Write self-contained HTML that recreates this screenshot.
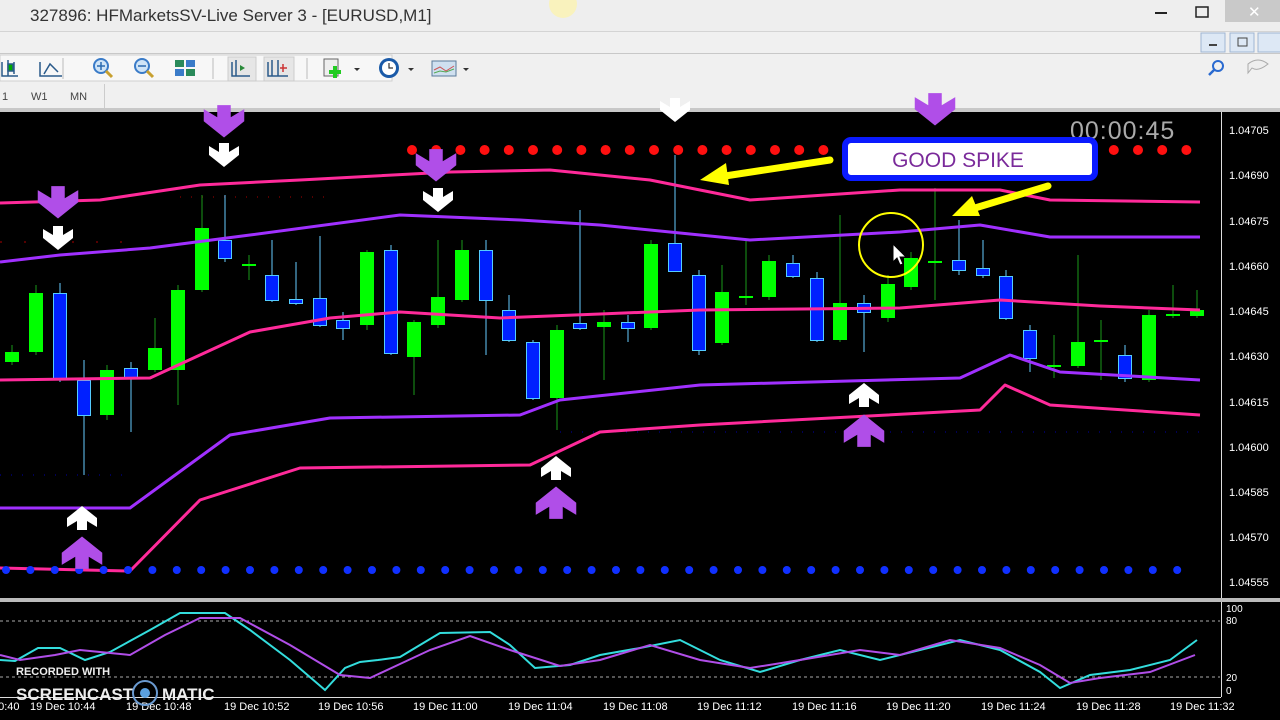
<!DOCTYPE html>
<html><head><meta charset="utf-8"><style>
html,body{margin:0;padding:0;width:1280px;height:720px;overflow:hidden;background:#000;font-family:"Liberation Sans",sans-serif}
</style></head><body>
<svg width="1280" height="720" xmlns="http://www.w3.org/2000/svg" style="position:absolute;left:0;top:0">
<defs>
<path id="dn" d="M-5,-14 h10 v9 l10,-6 v9 l-15,12 l-15,-12 v-9 l10,6 z"/>
<path id="up" d="M-5,14 h10 v-9 l10,6 v-9 l-15,-12 l-15,12 v9 l10,-6 z"/>
</defs>
<!-- window chrome -->
<rect x="0" y="0" width="1280" height="110" fill="#f0f0f0"/>
<rect x="0" y="0" width="1280" height="31" fill="#eeeeee"/>
<line x1="0" y1="31.5" x2="1280" y2="31.5" stroke="#d4d4d4"/>
<line x1="0" y1="53.5" x2="1280" y2="53.5" stroke="#c8c8c8"/>
<text x="30" y="21" font-size="17" fill="#333">327896: HFMarketsSV-Live Server 3 - [EURUSD,M1]</text>
<circle cx="563" cy="4" r="14" fill="#fbf3b0" opacity="0.8"/>
<rect x="1155" y="12" width="12" height="2" fill="#222"/>
<rect x="1196" y="7" width="12" height="10" fill="none" stroke="#222" stroke-width="1.5"/>
<rect x="1225" y="0" width="55" height="22" fill="#c9c9c9"/>
<text x="1248" y="17" font-size="15" fill="#fff">✕</text>
<rect x="1201" y="33" width="24" height="19" fill="#dde8f5" stroke="#9fb6d3"/>
<rect x="1209" y="44" width="8" height="2" fill="#444"/>
<rect x="1230" y="33" width="24" height="19" fill="#dde8f5" stroke="#9fb6d3"/>
<rect x="1238" y="38" width="9" height="8" fill="none" stroke="#444"/>
<rect x="1258" y="33" width="24" height="19" fill="#dde8f5" stroke="#9fb6d3"/>
<!-- toolbar -->
<rect x="0" y="55" width="392" height="26" fill="#f7f7f7" stroke="#d0d0d0"/>
<g stroke="#2a5a8a" stroke-width="1.5" fill="none">
<path d="M2 62 v14 h16 M8 60 v16 M14 62 v12"/>
<rect x="8" y="64" width="5" height="7" fill="#0a0"/>
<path d="M40 62 v14 h22 M44 74 l6-10 l8 8"/>
</g>
<line x1="63" y1="58" x2="63" y2="79" stroke="#bbb"/>
<circle cx="101" cy="66" r="7" fill="#cfe4f7" stroke="#3a7bc8" stroke-width="2"/><path d="M106 71 l6 6" stroke="#c8a030" stroke-width="3"/><path d="M97 66 h8 M101 62 v8" stroke="#2a6ab0" stroke-width="1.5"/>
<circle cx="142" cy="66" r="7" fill="#cfe4f7" stroke="#3a7bc8" stroke-width="2"/><path d="M147 71 l6 6" stroke="#c8a030" stroke-width="3"/><path d="M138 66 h8" stroke="#2a6ab0" stroke-width="1.5"/>
<rect x="175" y="60" width="9" height="7" fill="#2a8a5a"/><rect x="186" y="60" width="9" height="7" fill="#3a7bc8"/><rect x="175" y="69" width="9" height="7" fill="#3a7bc8"/><rect x="186" y="69" width="9" height="7" fill="#2a8a5a"/>
<line x1="213" y1="58" x2="213" y2="79" stroke="#bbb"/>
<rect x="228" y="57" width="28" height="24" fill="#e6e6e6" stroke="#ccc"/>
<rect x="264" y="57" width="30" height="24" fill="#e6e6e6" stroke="#ccc"/>
<path d="M232 62 v14 h18 M236 60 v16" stroke="#2a5a8a" stroke-width="1.5" fill="none"/><path d="M240 65 l5 3 l-5 3z" fill="#2a8a3a"/>
<path d="M268 62 v14 h20 M272 60 v16 M278 60 v16" stroke="#2a5a8a" stroke-width="1.5" fill="none"/><path d="M283 64 v8 M280 68 h7" stroke="#c33" stroke-width="1.5"/>
<line x1="307" y1="58" x2="307" y2="79" stroke="#bbb"/>
<rect x="324" y="59" width="14" height="17" fill="#eee" stroke="#666"/><path d="M335 66 v12 M329 72 h12" stroke="#2c2" stroke-width="4"/>
<path d="M354 68 l3 3 l3-3z" fill="#333"/>
<circle cx="389" cy="68" r="10" fill="#1a5aa8"/><circle cx="389" cy="68" r="7" fill="#fff"/><path d="M389 63 v5 h4" stroke="#333" stroke-width="1.2" fill="none"/>
<path d="M408 68 l3 3 l3-3z" fill="#333"/>
<rect x="432" y="61" width="24" height="15" fill="#cfe0f0" stroke="#5a7a9a"/><path d="M434 70 l6-3 l6 4 l8-5" stroke="#c55" fill="none"/><path d="M434 73 l6-2 l6 1 l8-3" stroke="#5a5" fill="none"/>
<path d="M463 68 l3 3 l3-3z" fill="#333"/>
<circle cx="1218" cy="66" r="5" fill="none" stroke="#2a6ad0" stroke-width="2"/><path d="M1214 70 l-5 5" stroke="#2a6ad0" stroke-width="2.5"/>
<path d="M1248 64 q10-8 20 0 q-10 8 -16 4 l-4 5 z" fill="#eee" stroke="#aaa"/>
<text x="2" y="100" font-size="11" fill="#444">1</text>
<text x="31" y="100" font-size="11" fill="#444">W1</text>
<text x="70" y="100" font-size="11" fill="#444">MN</text>
<line x1="104.5" y1="84" x2="104.5" y2="108" stroke="#ccc"/>
<rect x="0" y="108" width="1280" height="4" fill="#c8c8c8"/>

<!-- chart -->
<rect x="0" y="112" width="1280" height="608" fill="#000"/>
<line x1="1221.5" y1="112" x2="1221.5" y2="598" stroke="#ddd"/>
<rect x="0" y="598" width="1280" height="4" fill="#bbb"/>
<line x1="1221.5" y1="602" x2="1221.5" y2="697" stroke="#ddd"/>
<line x1="0" y1="697.5" x2="1221" y2="697.5" stroke="#ddd"/>

<line x1="180" y1="197" x2="330" y2="197" stroke="#a00" stroke-dasharray="1 10"/>
<line x1="0" y1="242" x2="130" y2="242" stroke="#a00" stroke-dasharray="2 22"/>
<line x1="560" y1="432" x2="1200" y2="432" stroke="#00a" stroke-dasharray="1 10"/>
<line x1="0" y1="475" x2="130" y2="475" stroke="#00a" stroke-dasharray="1 10"/>

<!-- candles -->
<g stroke-width="1">
<g stroke="#1a9a1a">
<line x1="12" y1="345" x2="12" y2="365"/><line x1="36" y1="285" x2="36" y2="355"/><line x1="107" y1="365" x2="107" y2="420"/><line x1="155" y1="318" x2="155" y2="372"/><line x1="178" y1="285" x2="178" y2="405"/><line x1="202" y1="195" x2="202" y2="292"/><line x1="249" y1="255" x2="249" y2="280"/><line x1="367" y1="250" x2="367" y2="330"/><line x1="414" y1="320" x2="414" y2="395"/><line x1="438" y1="240" x2="438" y2="328"/><line x1="462" y1="240" x2="462" y2="302"/><line x1="557" y1="325" x2="557" y2="430"/><line x1="604" y1="310" x2="604" y2="380"/><line x1="651" y1="240" x2="651" y2="330"/><line x1="722" y1="265" x2="722" y2="345"/><line x1="746" y1="240" x2="746" y2="305"/><line x1="769" y1="255" x2="769" y2="300"/><line x1="840" y1="215" x2="840" y2="342"/><line x1="888" y1="275" x2="888" y2="322"/><line x1="911" y1="252" x2="911" y2="290"/><line x1="935" y1="188" x2="935" y2="300"/><line x1="1054" y1="335" x2="1054" y2="378"/><line x1="1078" y1="255" x2="1078" y2="368"/><line x1="1101" y1="320" x2="1101" y2="380"/><line x1="1149" y1="310" x2="1149" y2="382"/><line x1="1173" y1="285" x2="1173" y2="318"/><line x1="1197" y1="290" x2="1197" y2="318"/>
</g>
<g fill="#00ff00">
<rect x="5" y="352" width="14" height="10"/><rect x="29" y="293" width="14" height="59"/><rect x="100" y="370" width="14" height="45"/><rect x="148" y="348" width="14" height="22"/><rect x="171" y="290" width="14" height="80"/><rect x="195" y="228" width="14" height="62"/><rect x="242" y="264" width="14" height="2"/><rect x="360" y="252" width="14" height="73"/><rect x="407" y="322" width="14" height="35"/><rect x="431" y="297" width="14" height="28"/><rect x="455" y="250" width="14" height="50"/><rect x="550" y="330" width="14" height="68"/><rect x="597" y="322" width="14" height="5"/><rect x="644" y="244" width="14" height="84"/><rect x="715" y="292" width="14" height="51"/><rect x="739" y="296" width="14" height="2"/><rect x="762" y="261" width="14" height="36"/><rect x="833" y="303" width="14" height="37"/><rect x="881" y="284" width="14" height="34"/><rect x="904" y="258" width="14" height="29"/><rect x="928" y="261" width="14" height="2"/><rect x="1047" y="365" width="14" height="2"/><rect x="1071" y="342" width="14" height="24"/><rect x="1094" y="340" width="14" height="2"/><rect x="1142" y="315" width="14" height="65"/><rect x="1166" y="314" width="14" height="2"/><rect x="1190" y="310" width="14" height="6"/>
</g>
<g stroke="#6cf">
<line x1="60" y1="283" x2="60" y2="382"/><line x1="84" y1="360" x2="84" y2="475"/><line x1="131" y1="362" x2="131" y2="432"/><line x1="225" y1="195" x2="225" y2="262"/><line x1="272" y1="240" x2="272" y2="302"/><line x1="296" y1="262" x2="296" y2="305"/><line x1="320" y1="236" x2="320" y2="327"/><line x1="343" y1="312" x2="343" y2="340"/><line x1="391" y1="245" x2="391" y2="355"/><line x1="486" y1="240" x2="486" y2="355"/><line x1="509" y1="295" x2="509" y2="342"/><line x1="533" y1="340" x2="533" y2="400"/><line x1="580" y1="210" x2="580" y2="330"/><line x1="628" y1="315" x2="628" y2="342"/><line x1="675" y1="155" x2="675" y2="272"/><line x1="699" y1="270" x2="699" y2="355"/><line x1="793" y1="255" x2="793" y2="278"/><line x1="817" y1="272" x2="817" y2="342"/><line x1="864" y1="295" x2="864" y2="352"/><line x1="959" y1="220" x2="959" y2="275"/><line x1="983" y1="240" x2="983" y2="278"/><line x1="1006" y1="270" x2="1006" y2="320"/><line x1="1030" y1="325" x2="1030" y2="372"/><line x1="1125" y1="345" x2="1125" y2="382"/>
</g>
<g fill="#0020ff" stroke="#5cf">
<rect x="53.5" y="293.5" width="13" height="86"/><rect x="77.5" y="380.5" width="13" height="35"/><rect x="124.5" y="368.5" width="13" height="10"/><rect x="218.5" y="240.5" width="13" height="18"/><rect x="265.5" y="275.5" width="13" height="25"/><rect x="289.5" y="299.5" width="13" height="4"/><rect x="313.5" y="298.5" width="13" height="27"/><rect x="336.5" y="320.5" width="13" height="8"/><rect x="384.5" y="250.5" width="13" height="103"/><rect x="479.5" y="250.5" width="13" height="50"/><rect x="502.5" y="310.5" width="13" height="30"/><rect x="526.5" y="342.5" width="13" height="56"/><rect x="573.5" y="323.5" width="13" height="5"/><rect x="621.5" y="322.5" width="13" height="6"/><rect x="668.5" y="243.5" width="13" height="28"/><rect x="692.5" y="275.5" width="13" height="75"/><rect x="786.5" y="263.5" width="13" height="13"/><rect x="810.5" y="278.5" width="13" height="62"/><rect x="857.5" y="303.5" width="13" height="9"/><rect x="952.5" y="260.5" width="13" height="10"/><rect x="976.5" y="268.5" width="13" height="7"/><rect x="999.5" y="276.5" width="13" height="42"/><rect x="1023.5" y="330.5" width="13" height="28"/><rect x="1118.5" y="355.5" width="13" height="23"/>
</g>
</g>

<!-- bands -->
<g fill="none" stroke-width="3" stroke-linejoin="round">
<polyline stroke="#ff2a9a" points="0,203 100,200 200,185 300,180 450,172 550,170 650,180 750,200 900,190 1000,190 1050,200 1200,202"/>
<polyline stroke="#a030ff" points="0,262 60,255 150,248 250,235 400,215 520,220 600,225 750,240 900,232 980,225 1050,237 1200,237"/>
<polyline stroke="#ff2a9a" points="0,380 150,378 250,332 330,318 400,312 500,318 600,314 700,310 900,308 1000,300 1100,306 1200,310"/>
<polyline stroke="#a030ff" points="0,508 130,508 230,435 330,418 520,415 560,400 700,385 960,378 1010,355 1060,372 1200,380"/>
<polyline stroke="#ff2a9a" points="0,568 130,571 200,500 300,468 530,465 600,432 700,425 980,410 1005,385 1050,405 1200,415"/>
</g>

<!-- dotted rows -->
<g fill="#ff1010">
<line x1="412" y1="150" x2="1205" y2="150" stroke="#ff1010" stroke-width="10" stroke-linecap="round" stroke-dasharray="0 24.2"/>
</g>
<line x1="6" y1="570" x2="1200" y2="570" stroke="#1030ff" stroke-width="8" stroke-linecap="round" stroke-dasharray="0 24.4"/>

<!-- arrows -->
<g fill="#b04ee8">
<use href="#dn" transform="translate(224,124) scale(1.35)"/><use href="#dn" transform="translate(58,205) scale(1.35)"/><use href="#dn" transform="translate(436,168) scale(1.35)"/><use href="#dn" transform="translate(935,112) scale(1.35)"/>
<use href="#up" transform="translate(82,550) scale(1.35)"/><use href="#up" transform="translate(556,500) scale(1.35)"/><use href="#up" transform="translate(864,428) scale(1.35)"/>
</g>
<g fill="#fff">
<use href="#dn" transform="translate(224,157)"/><use href="#dn" transform="translate(58,240)"/><use href="#dn" transform="translate(438,202)"/><use href="#dn" transform="translate(675,112)"/>
<use href="#up" transform="translate(82,516)"/><use href="#up" transform="translate(556,466)"/><use href="#up" transform="translate(864,393)"/>
</g>

<!-- timer -->
<text x="1070" y="139" font-size="25" fill="#aaa" letter-spacing="1">00:00:45</text>

<!-- annotations -->
<rect x="845" y="140" width="250" height="38" rx="6" fill="#fff" stroke="#0a1aff" stroke-width="6"/>
<text x="958" y="167" font-size="21" fill="#7a2a9a" text-anchor="middle">GOOD SPIKE</text>
<g stroke="#ffff00" stroke-width="7" stroke-linecap="round">
<line x1="830" y1="160" x2="725" y2="176"/>
<line x1="1048" y1="186" x2="975" y2="208"/>
</g>
<path d="M700 180 l26-17 l3 22z" fill="#ff0"/>
<path d="M952 216 l20-20 l8 20z" fill="#ff0"/>
<circle cx="891" cy="245" r="32" fill="none" stroke="#ff0" stroke-width="2"/>
<path d="M893 244 v18 l4-4 l3 7 l3-1 l-3-7 h6z" fill="#fff" stroke="#000" stroke-width="1"/>

<!-- price axis -->
<g font-size="11" fill="#fff">
<text x="1229" y="134">1.04705</text><text x="1229" y="179">1.04690</text><text x="1229" y="225">1.04675</text><text x="1229" y="270">1.04660</text><text x="1229" y="315">1.04645</text><text x="1229" y="360">1.04630</text><text x="1229" y="406">1.04615</text><text x="1229" y="451">1.04600</text><text x="1229" y="496">1.04585</text><text x="1229" y="541">1.04570</text><text x="1229" y="586">1.04555</text>
<text x="1226" y="612" font-size="10">100</text><text x="1226" y="624" font-size="10">80</text><text x="1226" y="681" font-size="10">20</text><text x="1226" y="694" font-size="10">0</text>
</g>

<!-- indicator -->
<line x1="0" y1="621" x2="1220" y2="621" stroke="#aaa" stroke-dasharray="3 3"/>
<line x1="0" y1="677" x2="1220" y2="677" stroke="#aaa" stroke-dasharray="3 3"/>
<polyline fill="none" stroke="#33dddd" stroke-width="2" points="0,660 15,661 38,648 60,648 85,660 110,652 150,630 180,613 225,613 250,630 290,660 325,690 345,668 360,662 378,660 400,657 440,633 490,632 510,645 535,668 570,665 600,655 640,648 680,640 720,660 760,672 800,660 840,650 880,660 920,650 960,640 1000,650 1040,672 1060,688 1090,675 1130,670 1170,660 1197,640"/>
<polyline fill="none" stroke="#b04ee8" stroke-width="2" points="0,655 20,660 55,655 80,650 100,652 130,655 165,635 200,618 240,618 290,645 340,675 370,678 400,664 430,650 470,636 510,650 560,666 600,660 650,645 700,660 750,668 800,660 860,650 900,655 950,640 1000,648 1040,665 1070,683 1100,678 1150,672 1195,655"/>

<!-- time axis -->
<g font-size="11" fill="#fff">
<text x="-8" y="710">10:40</text><text x="30" y="710">19 Dec 10:44</text><text x="126" y="710">19 Dec 10:48</text><text x="224" y="710">19 Dec 10:52</text><text x="318" y="710">19 Dec 10:56</text><text x="413" y="710">19 Dec 11:00</text><text x="508" y="710">19 Dec 11:04</text><text x="603" y="710">19 Dec 11:08</text><text x="697" y="710">19 Dec 11:12</text><text x="792" y="710">19 Dec 11:16</text><text x="886" y="710">19 Dec 11:20</text><text x="981" y="710">19 Dec 11:24</text><text x="1076" y="710">19 Dec 11:28</text><text x="1170" y="710">19 Dec 11:32</text>
</g>
<!-- watermark -->
<text x="16" y="675" font-size="11" font-weight="bold" fill="#eee">RECORDED WITH</text>
<text x="16" y="700" font-size="17" font-weight="bold" fill="#eee">SCREENCAST</text>
<circle cx="145" cy="693" r="12" fill="none" stroke="#6a9ad0" stroke-width="2"/>
<circle cx="145" cy="693" r="5" fill="#5aa0e0"/>
<text x="162" y="700" font-size="17" font-weight="bold" fill="#eee">MATIC</text>
</svg>
</body></html>
